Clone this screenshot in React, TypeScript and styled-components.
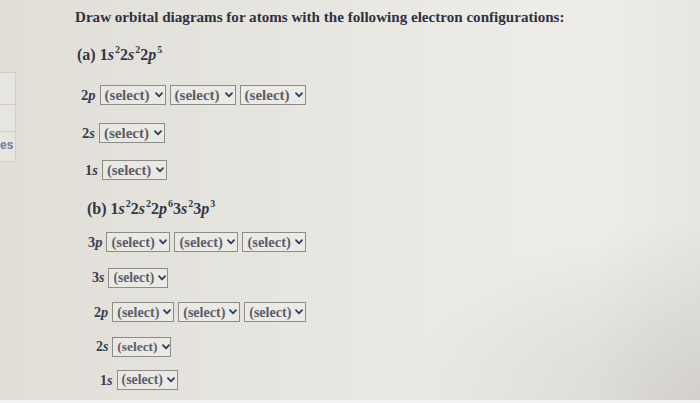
import React from "react";
import styled, { createGlobalStyle } from "styled-components";

const Global = createGlobalStyle`
  html, body { margin: 0; padding: 0; }
  body { width: 700px; height: 403px; overflow: hidden; }
`;

const Page = styled.div`
  width: 700px;
  height: 403px;
  display: flex;
  flex-direction: column;
  overflow: hidden;
  font-family: "Liberation Serif", "Times New Roman", serif;
  background:
    radial-gradient(ellipse 420px 260px at 100% 100%, rgba(170, 165, 165, 0.35), rgba(170, 165, 165, 0) 70%),
    linear-gradient(90deg, #e1ded8 0%, #e6e4de 35%, #ebeae6 65%, #eeedea 85%, #e7e6e3 100%);
`;

const Body = styled.div`
  flex: 1;
  display: flex;
`;

const Footer = styled.div`
  height: 3px;
  background: #f3f3f1;
`;

const Sidebar = styled.div`
  width: 16px;
  padding-top: 72px;
  display: flex;
  flex-direction: column;
`;

const SideBox = styled.div<{ $h: number }>`
  height: ${(p) => p.$h}px;
  border-top: 1px solid #d0cdc7;
  border-right: 1px solid #d0cdc7;
  border-bottom: 1px solid #d0cdc7;
  margin-bottom: -1px;
  background: rgba(240, 238, 234, 0.45);
  display: flex;
  align-items: flex-end;
  padding-bottom: 9px;
  box-sizing: border-box;
  font-family: "Liberation Sans", Arial, sans-serif;
  font-size: 12px;
  font-weight: bold;
  color: #6a7aa6;
  overflow: hidden;
  white-space: nowrap;
`;

const Main = styled.div`
  flex: 1;
  display: flex;
  flex-direction: column;
  padding-top: 7px;
`;

const Row = styled.div<{ $mt: number; $indent: number }>`
  height: 20px;
  display: flex;
  align-items: center;
  margin-top: ${(p) => p.$mt}px;
  margin-left: ${(p) => p.$indent}px;
  gap: 4px;
`;

const Title = styled.div`
  font-size: 15.1px;
  font-weight: bold;
  color: #2f3140;
  white-space: nowrap;
`;

const PartLabel = styled.div`
  font-size: 16px;
  font-weight: bold;
  color: #33364a;
  white-space: nowrap;
  i { font-style: italic; margin-right: 1px; }
  sup {
    font-size: 10px;
    vertical-align: 0;
    position: relative;
    top: -7px;
  }
`;

const Orbital = styled.div<{ $size: number }>`
  font-size: ${(p) => p.$size}px;
  font-weight: bold;
  color: #3a3d50;
  white-space: nowrap;
  i { font-style: italic; }
`;

const SelectBox = styled.div<{ $w: number }>`
  width: ${(p) => p.$w}px;
  height: 20px;
  box-sizing: border-box;
  border: 1px solid #8c8c8a;
  background: rgba(240, 239, 235, 0.5);
  display: flex;
  align-items: center;
  padding-left: ${(p) => Math.round(p.$w * 0.06)}px;
  gap: ${(p) => Math.round(p.$w * 0.07)}px;
  font-size: ${(p) => (p.$w * 0.227).toFixed(1)}px;
  font-weight: bold;
  color: #5c5e68;
  white-space: nowrap;
`;

const Chevron = () => (
  <svg width="8" height="6" viewBox="0 0 8 6">
    <path d="M1 1.2 L4 4.3 L7 1.2" fill="none" stroke="#2f3a5c" strokeWidth="1.8" strokeLinecap="round" strokeLinejoin="round" />
  </svg>
);

const Select = ({ w }: { w: number }) => (
  <SelectBox $w={w}>
    (select)
    <Chevron />
  </SelectBox>
);

type OrbRow = { n: string; l: string; count: number; mt: number; indent: number; w: number };

const OrbitalRow = ({ n, l, count, mt, indent, w }: OrbRow) => (
  <Row $mt={mt} $indent={indent}>
    <Orbital $size={Math.round((14 + (w - 60) * 0.1) * 10) / 10}>
      {n}
      <i>{l}</i>
    </Orbital>
    {Array.from({ length: count }).map((_, i) => (
      <Select key={i} w={w} />
    ))}
  </Row>
);

const Config = ({ parts }: { parts: [string, string, string][] }) => (
  <>
    {parts.map(([n, l, e], i) => (
      <React.Fragment key={i}>
        {n}
        <i>{l}</i>
        <sup>{e}</sup>
      </React.Fragment>
    ))}
  </>
);

const partA: OrbRow[] = [
  { n: "2", l: "p", count: 3, mt: 20, indent: 65, w: 66 },
  { n: "2", l: "s", count: 1, mt: 18, indent: 66, w: 66 },
  { n: "1", l: "s", count: 1, mt: 17, indent: 69, w: 65 },
];

const partB: OrbRow[] = [
  { n: "3", l: "p", count: 3, mt: 13, indent: 72, w: 64 },
  { n: "3", l: "s", count: 1, mt: 16, indent: 76, w: 60 },
  { n: "2", l: "p", count: 3, mt: 14, indent: 78, w: 62 },
  { n: "2", l: "s", count: 1, mt: 15, indent: 80, w: 59 },
  { n: "1", l: "s", count: 1, mt: 13, indent: 84, w: 61 },
];

export default function App() {
  return (
    <Page>
      <Global />
      <Body>
        <Sidebar>
          <SideBox $h={33} />
          <SideBox $h={28} />
          <SideBox $h={31}>es</SideBox>
        </Sidebar>
        <Main>
          <Row $mt={0} $indent={59}>
            <Title>Draw orbital diagrams for atoms with the following electron configurations:</Title>
          </Row>
          <Row $mt={18} $indent={61}>
            <PartLabel>
              (a){" "}
              <Config parts={[["1", "s", "2"], ["2", "s", "2"], ["2", "p", "5"]]} />
            </PartLabel>
          </Row>
          {partA.map((r, i) => (
            <OrbitalRow key={"a" + i} {...r} />
          ))}
          <Row $mt={19} $indent={71}>
            <PartLabel>
              (b){" "}
              <Config
                parts={[
                  ["1", "s", "2"],
                  ["2", "s", "2"],
                  ["2", "p", "6"],
                  ["3", "s", "2"],
                  ["3", "p", "3"],
                ]}
              />
            </PartLabel>
          </Row>
          {partB.map((r, i) => (
            <OrbitalRow key={"b" + i} {...r} />
          ))}
        </Main>
      </Body>
      <Footer />
    </Page>
  );
}
